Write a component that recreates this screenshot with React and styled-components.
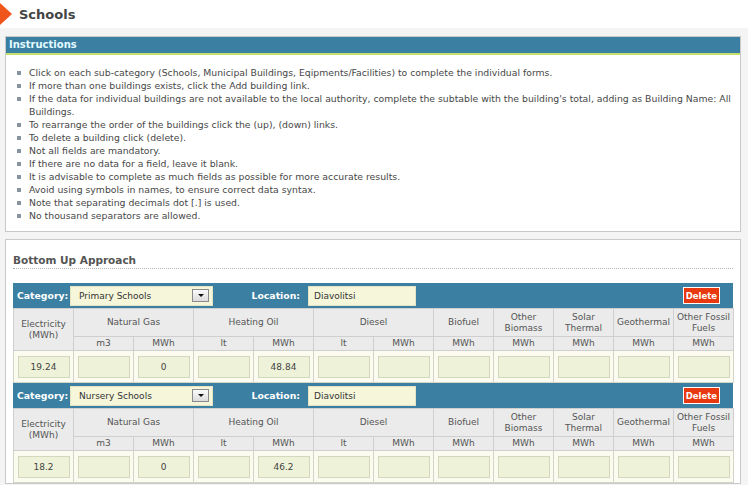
import React from 'react'
import styled, { createGlobalStyle } from 'styled-components'

const instructions = [
	'Click on each sub-category (Schools, Municipal Buildings, Eqipments/Facilities) to complete the individual forms.',
	'If more than one buildings exists, click the Add building link.',
	"If the data for individual buildings are not available to the local authority, complete the subtable with the building's total, adding as Building Name: All Buildings.",
	'To rearrange the order of the buildings click the (up), (down) links.',
	'To delete a building click (delete).',
	'Not all fields are mandatory.',
	'If there are no data for a field, leave it blank.',
	'It is advisable to complete as much fields as possible for more accurate results.',
	'Avoid using symbols in names, to ensure correct data syntax.',
	'Note that separating decimals dot [.] is used.',
	'No thousand separators are allowed.'
]

const buildings = [
	{ category: 'Primary Schools', location: 'Diavolitsi', values: ['19.24', '', '0', '', '48.84', '', '', '', '', '', '', ''] },
	{ category: 'Nursery Schools', location: 'Diavolitsi', values: ['18.2', '', '0', '', '46.2', '', '', '', '', '', '', ''] }
]

const GlobalStyle = createGlobalStyle`
	body {
		margin: 0;
		background: #f4f4f4;
		font-family: "DejaVu Sans", Verdana, sans-serif;
		overflow: hidden;
	}
`

const Page = styled.div`
	width: 748px;
	height: 485px;
	overflow: hidden;
`

const TitleBar = styled.div`
	height: 28px;
	background: #fff;
	display: flex;
	align-items: center;
`

const Arrow = styled.div`
	width: 0;
	height: 0;
	border-top: 11px solid transparent;
	border-bottom: 11px solid transparent;
	border-left: 12px solid #f0561c;
	margin-right: 7px;
`

const Title = styled.h1`
	margin: 0;
	font-size: 13px;
	font-weight: bold;
	color: #444;
`

const Panels = styled.div`
	padding: 8px 7px 0 5px;
	display: flex;
	flex-direction: column;
	gap: 7px;
`

const Panel = styled.div`
	background: #fff;
	border: 1px solid #c9c9c9;
	padding: ${({ pad }) => pad || 0};
`

const PanelHead = styled.div`
	height: 16px;
	line-height: 16px;
	background: #3b7fa2;
	border-bottom: 2px solid #c4e06a;
	padding-left: 3px;
	font-size: 10px;
	font-weight: bold;
	color: #e2fbff;
`

const List = styled.ul`
	list-style: none;
	margin: 0;
	padding: 11px 2px 9px 6px;
`

const Item = styled.li`
	display: flex;
	font-size: 9.3px;
	line-height: 13px;
	color: #474747;
`

const Bullet = styled.span`
	flex: none;
	width: 4px;
	height: 4px;
	background: #8794a0;
	margin: 5px 8px 0 5px;
`

const SectionTitle = styled.h2`
	margin: 0 0 14px;
	padding-bottom: 2px;
	border-bottom: 1px dotted #b5b5b5;
	font-size: 10.5px;
	font-weight: bold;
	color: #555;
`

const Bar = styled.div`
	height: 25px;
	background: #3b7fa2;
	display: flex;
	align-items: center;
	padding: 0 13px 0 4px;
`

const BarLabel = styled.span`
	width: ${({ w }) => w}px;
	padding-right: ${({ pr }) => pr || 0}px;
	text-align: ${({ right }) => (right ? 'right' : 'left')};
	box-sizing: border-box;
	font-size: 9.3px;
	font-weight: bold;
	color: #fff;
`

const Select = styled.div`
	width: 143px;
	height: 20px;
	box-sizing: border-box;
	background: #f6f6da;
	border: 1px solid #e4e4c4;
	display: flex;
	align-items: center;
	justify-content: space-between;
	padding: 0 3px 0 8px;
	font-size: 9px;
	color: #333;
`

const DropButton = styled.span`
	width: 17px;
	height: 13px;
	box-sizing: border-box;
	border: 1px solid #8a8a8a;
	background: linear-gradient(#fafafa, #dcdcdc);
	display: flex;
	align-items: center;
	justify-content: center;

	&::after {
		content: '';
		border-left: 3px solid transparent;
		border-right: 3px solid transparent;
		border-top: 3px solid #111;
	}
`

const BarInput = styled.div`
	width: 108px;
	height: 20px;
	box-sizing: border-box;
	background: #f6f6da;
	border: 1px solid #e4e4c4;
	padding-left: 5px;
	line-height: 18px;
	font-size: 9px;
	color: #333;
`

const DeleteButton = styled.button`
	margin-left: auto;
	height: 17px;
	padding: 0 2px;
	background: #e8380f;
	border: 1px solid #fff;
	color: #fff;
	font-family: inherit;
	font-size: 8.5px;
	font-weight: bold;
`

const Table = styled.table`
	width: 720px;
	table-layout: fixed;
	border-collapse: collapse;
`

const Head = styled.th`
	height: ${({ h }) => h}px;
	padding: 0;
	background: #ebebeb;
	border: 1px solid #cfcfcf;
	font-size: 9px;
	font-weight: normal;
	line-height: 11px;
	color: #555;
	text-align: center;
`

const Cell = styled.td`
	height: 31px;
	padding: 0;
	background: #fbfbf0;
	border: 1px solid #d4d4c8;
	text-align: center;
`

const ValueBox = styled.div`
	width: 52px;
	height: 22px;
	margin: 0 auto;
	box-sizing: border-box;
	background: #eef2d8;
	border: 1px solid #d3d7bd;
	line-height: 20px;
	font-size: 9px;
	color: #444;
`

const groups = [
	['Natural Gas', ['m3', 'MWh']],
	['Heating Oil', ['lt', 'MWh']],
	['Diesel', ['lt', 'MWh']]
]

const singles = [['Biofuel'], ['Other', 'Biomass'], ['Solar', 'Thermal'], ['Geothermal'], ['Other Fossil', 'Fuels']]

const Building = ({ category, location, values }) => (
	<div>
		<Bar>
			<BarLabel w={53}>Category:</BarLabel>
			<Select>
				{category}
				<DropButton />
			</Select>
			<BarLabel w={95} pr={8} right>
				Location:
			</BarLabel>
			<BarInput>{location}</BarInput>
			<DeleteButton>Delete</DeleteButton>
		</Bar>
		<Table>
			<colgroup>
				{values.map((_, i) => (
					<col key={i} width="60" />
				))}
			</colgroup>
			<thead>
				<tr>
					<Head h={27} rowSpan={2}>
						Electricity
						<br />
						(MWh)
					</Head>
					{groups.map(([name]) => (
						<Head h={27} colSpan={2} key={name}>
							{name}
						</Head>
					))}
					{singles.map(lines => (
						<Head h={27} key={lines.join()}>
							{lines.map((l, i) => (
								<React.Fragment key={l}>
									{i > 0 && <br />}
									{l}
								</React.Fragment>
							))}
						</Head>
					))}
				</tr>
				<tr>
					{groups.flatMap(([name, units]) =>
						units.map(u => (
							<Head h={13} key={name + u}>
								{u}
							</Head>
						))
					)}
					{singles.map(lines => (
						<Head h={13} key={lines.join()}>
							MWh
						</Head>
					))}
				</tr>
			</thead>
			<tbody>
				<tr>
					{values.map((v, i) => (
						<Cell key={i}>
							<ValueBox>{v}</ValueBox>
						</Cell>
					))}
				</tr>
			</tbody>
		</Table>
	</div>
)

const App = () => (
	<Page>
		<GlobalStyle />
		<TitleBar>
			<Arrow />
			<Title>Schools</Title>
		</TitleBar>
		<Panels>
			<Panel>
				<PanelHead>Instructions</PanelHead>
				<List>
					{instructions.map(text => (
						<Item key={text}>
							<Bullet />
							<span>{text}</span>
						</Item>
					))}
				</List>
			</Panel>
			<Panel pad="14px 7px 0">
				<SectionTitle>Bottom Up Approach</SectionTitle>
				{buildings.map(b => (
					<Building key={b.category} {...b} />
				))}
			</Panel>
		</Panels>
	</Page>
)

export default App
